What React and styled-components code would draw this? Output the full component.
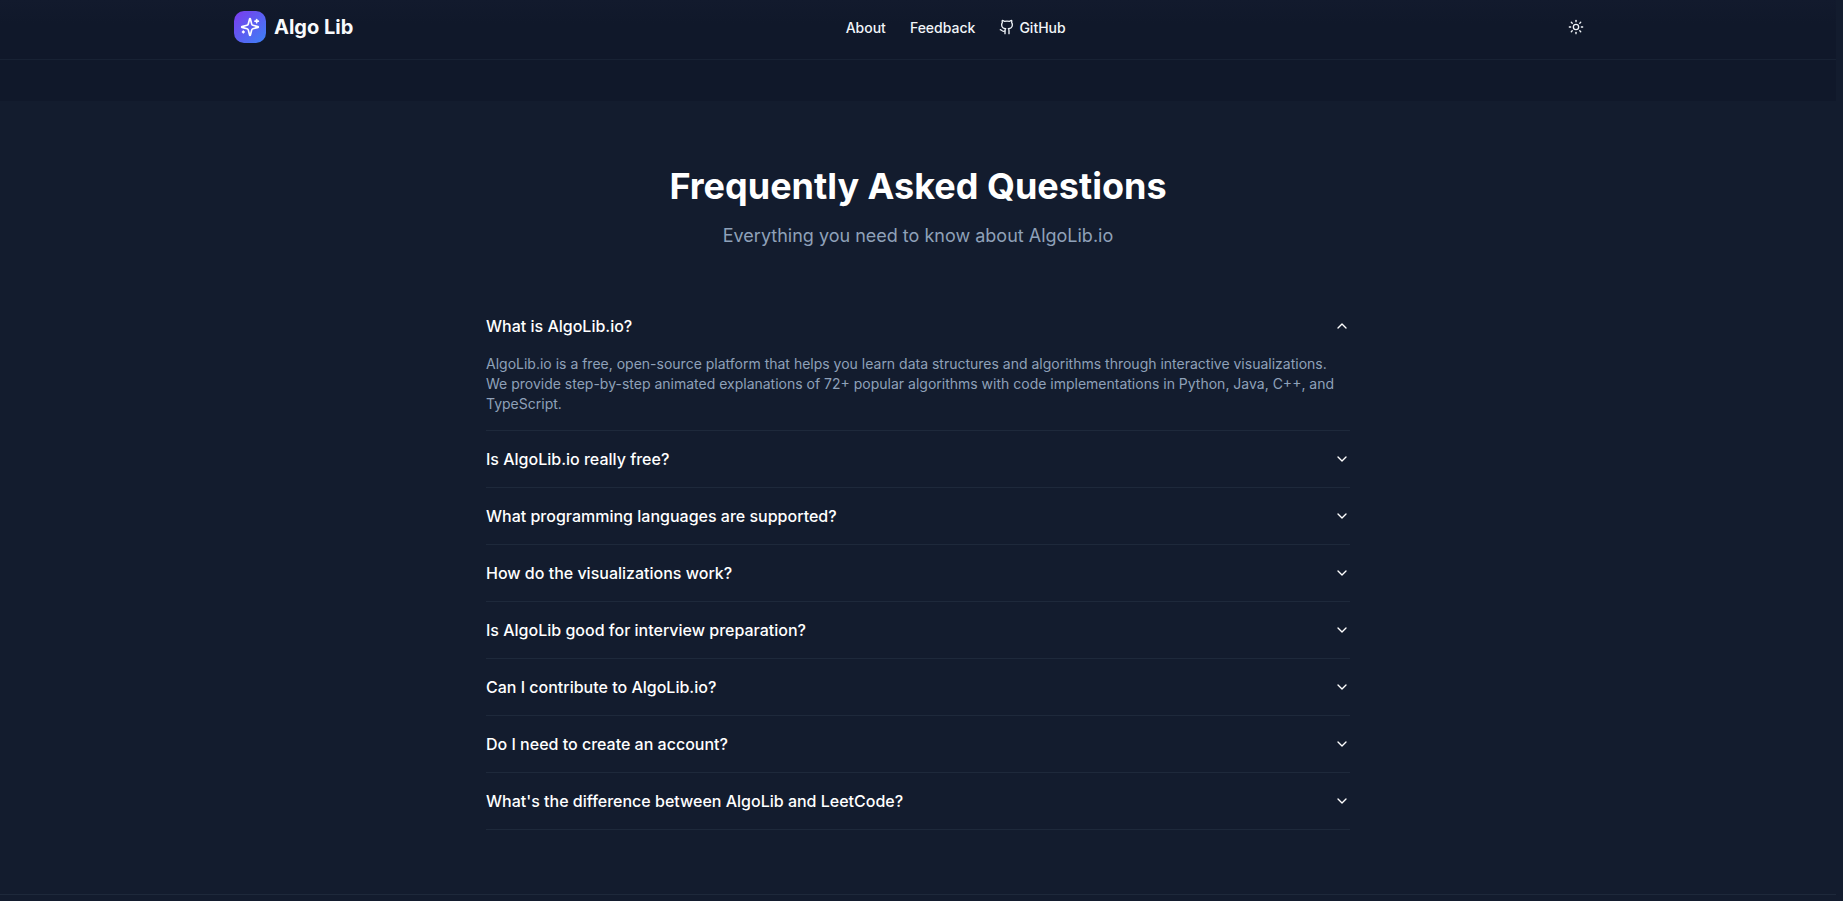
import React from "react";
import styled, { createGlobalStyle } from "styled-components";
import { Github, Sun, ChevronUp, ChevronDown } from "lucide-react";

const GlobalStyle = createGlobalStyle`
  html, body {
    margin: 0;
    height: 901px;
    overflow: hidden;
    background: #131c2e;
    color: #fff;
    font-family: Inter, "Liberation Sans", sans-serif;
  }
`;
const Page = styled.div`
  width: 1836px;
`;
const Header = styled.header`
  height: 59px;
  background: linear-gradient(#121a2d, #10182a 40%);
  border-bottom: 1px solid #182234;
`;
const HeaderInner = styled.div`
  width: 1368px;
  height: 100%;
  margin: 0 auto;
  padding: 0 8px 5px 0;
  box-sizing: border-box;
  display: flex;
  justify-content: space-between;
  align-items: center;
`;
const Brand = styled.div`
  display: flex;
  align-items: center;
  gap: 8px;
`;
const LogoBox = styled.div`
  width: 32px;
  height: 32px;
  border-radius: 10px;
  background: linear-gradient(135deg, #7c3aed, #3b82f6);
  display: flex;
  align-items: center;
  justify-content: center;
  color: #fff;
`;
const BrandName = styled.span`
  font-size: 20px;
  font-weight: 700;
  color: #f8fafc;
`;
const Nav = styled.nav`
  display: flex;
  align-items: center;
  gap: 24px;
`;
const NavLink = styled.a`
  display: flex;
  align-items: center;
  gap: 4px;
  font-size: 14px;
  font-weight: 500;
  color: #f1f5f9;
`;
const ThemeButton = styled.button`
  width: 36px;
  height: 36px;
  padding: 0;
  border: none;
  background: none;
  color: #f1f5f9;
  display: flex;
  align-items: center;
  justify-content: center;
`;
const Strip = styled.div`
  height: 41px;
  background: #10182a;
`;
const Main = styled.main`
  padding-top: 65px;
`;
const Title = styled.h1`
  margin: 0;
  font-size: 36px;
  line-height: 40px;
  font-weight: 700;
  text-align: center;
  color: #fff;
`;
const Subtitle = styled.p`
  margin: 16px 0 48px;
  font-size: 18px;
  line-height: 28px;
  text-align: center;
  color: #8fa1b9;
`;
const List = styled.div`
  width: 864px;
  margin: 0 auto;
`;
const Item = styled.div`
  border-bottom: 1px solid #1e293b;
`;
const Question = styled.div`
  height: 56px;
  display: flex;
  align-items: center;
  justify-content: space-between;
  font-size: 16px;
  font-weight: 500;
  color: #fff;
`;
const Answer = styled.p`
  margin: 0;
  padding-bottom: 16px;
  font-size: 14px;
  line-height: 20px;
  color: #8fa1b9;
`;
const Footer = styled.footer`
  margin-top: 64px;
  height: 7px;
  border-top: 1px solid #1e293b;
`;

const questions = [
  "What is AlgoLib.io?",
  "Is AlgoLib.io really free?",
  "What programming languages are supported?",
  "How do the visualizations work?",
  "Is AlgoLib good for interview preparation?",
  "Can I contribute to AlgoLib.io?",
  "Do I need to create an account?",
  "What's the difference between AlgoLib and LeetCode?",
];

const answer =
  "AlgoLib.io is a free, open-source platform that helps you learn data structures and algorithms through interactive visualizations. We provide step-by-step animated explanations of 72+ popular algorithms with code implementations in Python, Java, C++, and TypeScript.";

function SparkleIcon() {
  return (
    <svg width="20" height="20" viewBox="0 0 24 24" fill="none" stroke="currentColor" strokeWidth="2" strokeLinecap="round" strokeLinejoin="round">
      <path d="M9.937 15.5A2 2 0 0 0 8.5 14.063l-6.135-1.582a.5.5 0 0 1 0-.962L8.5 9.936A2 2 0 0 0 9.937 8.5l1.582-6.135a.5.5 0 0 1 .963 0L14.063 8.5A2 2 0 0 0 15.5 9.937l6.135 1.581a.5.5 0 0 1 0 .964L15.5 14.063a2 2 0 0 0-1.437 1.437l-1.582 6.135a.5.5 0 0 1-.963 0z" />
      <path d="M20 3v4" />
      <path d="M22 5h-4" />
      <path d="M4 17v2" />
      <path d="M5 18H3" />
    </svg>
  );
}

function App() {
  return (
    <Page>
      <GlobalStyle />
      <Header>
        <HeaderInner>
          <Brand>
            <LogoBox>
              <SparkleIcon />
            </LogoBox>
            <BrandName>Algo Lib</BrandName>
          </Brand>
          <Nav>
            <NavLink>About</NavLink>
            <NavLink>Feedback</NavLink>
            <NavLink>
              <Github size={16} />
              GitHub
            </NavLink>
          </Nav>
          <ThemeButton>
            <Sun size={16} />
          </ThemeButton>
        </HeaderInner>
      </Header>
      <Strip />
      <Main>
        <Title>Frequently Asked Questions</Title>
        <Subtitle>Everything you need to know about AlgoLib.io</Subtitle>
        <List>
          {questions.map((q, i) => (
            <Item key={q}>
              <Question>
                {q}
                {i === 0 ? <ChevronUp size={16} /> : <ChevronDown size={16} />}
              </Question>
              {i === 0 && <Answer>{answer}</Answer>}
            </Item>
          ))}
        </List>
      </Main>
      <Footer />
    </Page>
  );
}
export default App;
